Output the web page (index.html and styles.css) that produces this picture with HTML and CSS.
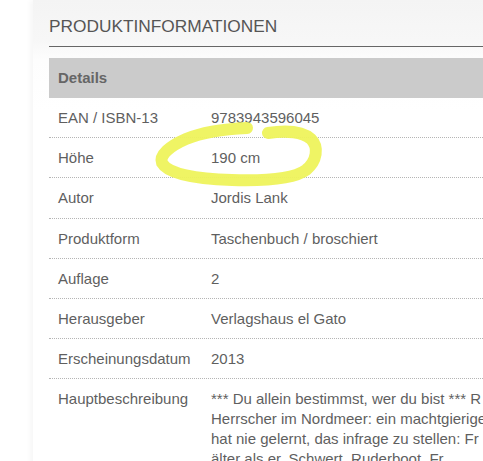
FILE: index.html
```html
<!DOCTYPE html>
<html lang="de">
<head>
<meta charset="utf-8">
<title>Produktinformationen</title>
<link rel="stylesheet" href="styles.css">
</head>
<body>
<div class="page">
  <section class="panel">
    <h2 class="title">PRODUKTINFORMATIONEN</h2>
    <div class="table">
      <div class="table-head">Details</div>
      <div class="row"><div class="label">EAN / ISBN-13</div><div class="value">9783943596045</div></div>
      <div class="row"><div class="label">Höhe</div><div class="value">190 cm</div></div>
      <div class="row"><div class="label">Autor</div><div class="value">Jordis Lank</div></div>
      <div class="row"><div class="label">Produktform</div><div class="value">Taschenbuch / broschiert</div></div>
      <div class="row"><div class="label">Auflage</div><div class="value">2</div></div>
      <div class="row"><div class="label">Herausgeber</div><div class="value">Verlagshaus el Gato</div></div>
      <div class="row"><div class="label">Erscheinungsdatum</div><div class="value">2013</div></div>
      <div class="row last"><div class="label">Hauptbeschreibung</div>
        <div class="value desc">
          <span class="line">*** Du allein bestimmst, wer du bist *** R</span>
          <span class="line">Herrscher im Nordmeer: ein machtgierige</span>
          <span class="line">hat nie gelernt, das infrage zu stellen: Fr</span>
          <span class="line">älter als er. Schwert, Ruderboot, Fr</span>
        </div>
      </div>
    </div>
  </section>
  <svg class="marker" width="483" height="461" viewBox="0 0 483 461" aria-hidden="true">
    <path d="M247,128 C226,129 203,132 186,139 C170,146 159,155 162,163 C168,174 196,179 232,180 C266,181 294,179 306,170 C317,161 319,147 311,139 C303,132 287,130 268,133" fill="none" stroke="#eef35c" stroke-width="12" stroke-linecap="round" stroke-linejoin="round" opacity="0.95"/>
  </svg>
</div>
</body>
</html>
```
FILE: styles.css
```css
html, body {
  margin: 0;
  padding: 0;
  background: #ffffff;
  overflow: hidden;
}
.page {
  position: relative;
  width: 483px;
  height: 461px;
  overflow: hidden;
  font-family: "Liberation Sans", Arial, sans-serif;
}
.panel {
  margin-left: 33px;
  width: 640px;
  min-height: 461px;
  padding: 14px 0 0 16px;
  box-sizing: border-box;
  background: linear-gradient(#f4f4f4 0, #f7f7f7 40px, #fdfdfd 60px, #ffffff 110px);
  box-shadow: -3px 0 5px rgba(0, 0, 0, 0.035);
}
.title {
  margin: 0;
  font-weight: normal;
  font-size: 17.3px;
  line-height: 25px;
  color: #555555;
  padding-bottom: 7px;
  border-bottom: 1px solid #666666;
}
.table {
  margin-top: 11px;
}
.table-head {
  background: #cbcbcb;
  height: 40px;
  line-height: 40px;
  padding-left: 9px;
  font-size: 15px;
  font-weight: bold;
  color: #666666;
}
.row {
  display: flex;
  padding: 10px 0 9.2px 9px;
  border-bottom: 1px dotted #b5b5b5;
  font-size: 15px;
  line-height: 20px;
  color: #5f5f5f;
}
.row.last {
  border-bottom: none;
}
.label {
  width: 153px;
  flex: none;
}
.value {
  flex: 1;
}
.desc .line {
  display: block;
  white-space: nowrap;
}
.marker {
  position: absolute;
  top: 0;
  left: 0;
  pointer-events: none;
}
```
